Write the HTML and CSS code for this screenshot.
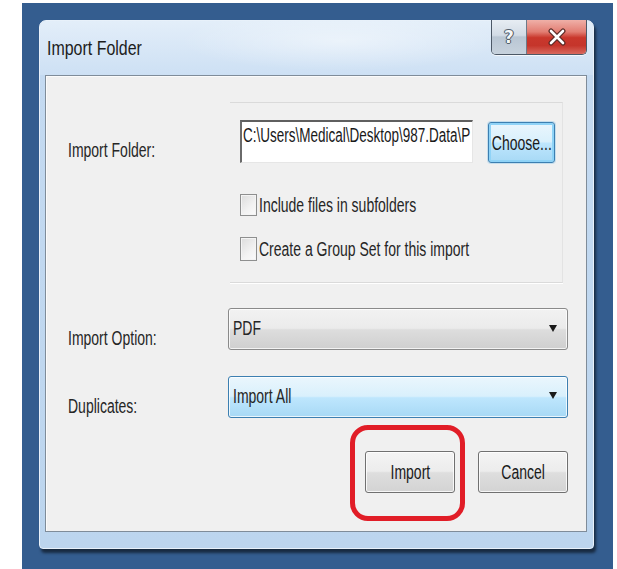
FILE: index.html
```html
<!DOCTYPE html>
<html lang="en">
<head>
<meta charset="utf-8">
<title>Import Folder</title>
<link rel="stylesheet" href="styles.css">
</head>
<body>
<div class="desktop">
  <div class="window">
    <div class="titlebar">
      <div class="title"><span class="nx">Import Folder</span></div>
      <div class="caption-btns">
        <div class="cbtn help"><span class="q">?</span></div>
        <div class="cbtn close">
          <svg width="18" height="18" viewBox="0 0 18 18" aria-hidden="true">
            <path d="M3 3 L15 15 M15 3 L3 15" stroke="#5a2a26" stroke-width="5" stroke-linecap="round"/>
            <path d="M3 3 L15 15 M15 3 L3 15" stroke="#ffffff" stroke-width="2.6" stroke-linecap="round"/>
          </svg>
        </div>
      </div>
    </div>

    <div class="client">
      <div class="folder-section">
        <div class="label folder-label"><span class="nx">Import Folder:</span></div>
        <div class="group">
          <div class="path-row">
            <div class="textbox"><span class="nx path">C:\Users\Medical\Desktop\987.Data\P</span></div>
            <div class="btn choose"><span class="nx c">Choose...</span></div>
          </div>
          <div class="check first"><span class="box"></span><span class="nx">Include files in subfolders</span></div>
          <div class="check second"><span class="box"></span><span class="nx">Create a Group Set for this import</span></div>
        </div>
      </div>

      <div class="field option">
        <div class="label"><span class="nx">Import Option:</span></div>
        <div class="combo"><span class="nx">PDF</span><span class="arrow"></span></div>
      </div>

      <div class="field dupes">
        <div class="label"><span class="nx">Duplicates:</span></div>
        <div class="combo hot"><span class="nx">Import All</span><span class="arrow"></span></div>
      </div>

      <div class="actions">
        <div class="btn push"><span class="nx c">Import</span></div>
        <div class="btn push"><span class="nx c">Cancel</span></div>
      </div>

      <div class="highlight"></div>
    </div>
  </div>
</div>
</body>
</html>
```

FILE: styles.css
```css
* {
  box-sizing: border-box;
}

html, body {
  margin: 0;
  padding: 0;
  background: #ffffff;
}

body {
  font-family: "Liberation Sans", Arial, sans-serif;
  font-size: 20px;
  color: #262626;
}

/* condensed UI text */
.nx {
  display: inline-block;
  white-space: nowrap;
  transform: scaleX(0.7);
  transform-origin: 0 50%;
  line-height: 22px;
}

.nx.c {
  transform-origin: 50% 50%;
}

.desktop {
  margin: 3px 4px 0 22px;
  width: 591px;
  height: 566px;
  padding: 17px 0 0 17px;
  background: #345d8f;
}

/* Aero style window */
.window {
  width: 555px;
  height: 529px;
  border: 1px solid #e8f1fa;
  border-radius: 7px 7px 4px 4px;
  background: linear-gradient(180deg, #dfeaf7 0, #cfe1f4 30px, #c4daf1 54px, #bcd5ee 100%);
  box-shadow: 2px 4px 3px rgba(0, 0, 0, 0.55);
  display: flex;
  flex-direction: column;
}

.titlebar {
  height: 54px;
  display: flex;
  justify-content: space-between;
  align-items: flex-start;
  background:
    radial-gradient(ellipse 160px 30px at 300px 20px, rgba(255, 255, 255, 0.45), rgba(255, 255, 255, 0) 100%),
    linear-gradient(180deg, #e3eef9 0, #cde0f4 100%);
  border-radius: 6px 6px 0 0;
}

.title {
  margin: 15px 0 0 7px;
  font-size: 21px;
  color: #1c1c1c;
}

.title .nx {
  transform: scaleX(0.76);
}

.caption-btns {
  display: flex;
  margin-right: 6px;
  margin-top: -1px;
  height: 35px;
  border: 1px solid #4c5866;
  border-top: none;
  border-radius: 0 0 5px 5px;
  overflow: hidden;
  box-shadow: 0 1px 0 rgba(255, 255, 255, 0.7);
}

.cbtn {
  display: flex;
  align-items: center;
  justify-content: center;
}

.help {
  width: 35px;
  border-right: 1px solid #6d7a88;
  background: linear-gradient(180deg, #e7edf3 0, #d2dbe5 45%, #b9c6d3 50%, #c7d2dd 100%);
}

.help .q {
  font-family: "DejaVu Sans", sans-serif;
  font-weight: bold;
  font-size: 17px;
  color: #f4f6f8;
  text-shadow: 0 0 1px #38434f, 0 0 1px #38434f, 1px 0 0 #5c6773, -1px 0 0 #5c6773, 0 1px 0 #5c6773, 0 -1px 0 #5c6773;
}

.close {
  width: 59px;
  background: linear-gradient(180deg, #efb0a8 0, #e27d72 35%, #c9372c 52%, #c5352b 75%, #d8685d 100%);
}

/* client area */
.client {
  position: relative;
  margin: 0 6px 16px 5px;
  flex: 1;
  border: 1px solid #7f8c99;
  background: #f0f0f0;
  padding-left: 22px;
  box-shadow: inset 1px 1px 0 #fbfbfb;
}

.label {
  color: #262626;
}

.folder-section {
  display: grid;
  grid-template-columns: 162px 333px;
  margin-top: 26px;
}

.folder-label {
  padding-top: 37px;
}

.group {
  height: 181px;
  border-top: 1px solid #dadada;
  border-right: 1px solid #e3e3e3;
  border-bottom: 1px solid #dadada;
  box-shadow: 0 1px 0 #ffffff;
  padding: 17px 0 0 10px;
}

.path-row {
  display: flex;
  align-items: flex-end;
  gap: 15px;
}

.textbox {
  width: 233px;
  height: 43px;
  background: #ffffff;
  border-top: 2px solid #5f5f5f;
  border-left: 2px solid #6a6a6a;
  border-right: 1px solid #e6e6e6;
  border-bottom: 1px solid #e6e6e6;
  padding: 2px 0 0 1px;
  overflow: hidden;
  color: #1a1a1a;
}

.nx.path {
  transform: scaleX(0.675);
}

.btn {
  display: flex;
  align-items: center;
  justify-content: center;
  border: 1px solid #707070;
  border-radius: 3px;
  background: linear-gradient(180deg, #f4f4f4 0, #ececec 48%, #dedede 52%, #d3d3d3 100%);
  box-shadow: inset 0 0 0 1px rgba(255, 255, 255, 0.8);
  color: #1a1a1a;
}

.choose {
  width: 67px;
  height: 41px;
  border: 1px solid #3c7fb1;
  background: linear-gradient(180deg, #eaf6fd 0, #d9f0fc 48%, #bee6fd 52%, #a7d9f5 100%);
  box-shadow: inset 0 0 0 2px #8fd3f7, 0 0 0 1px rgba(120, 190, 230, 0.35);
}

.check {
  display: flex;
  align-items: center;
  gap: 2px;
  color: #262626;
}

.check.first {
  margin-top: 31px;
  height: 22px;
}

.check.second {
  margin-top: 20px;
  height: 25px;
}

.box {
  flex: none;
  width: 17px;
  height: 22px;
  border: 1px solid #8e8f8f;
  background: linear-gradient(135deg, #dcdcdc 0, #f2f2f2 60%, #fbfbfb 100%);
  box-shadow: inset 0 0 0 1px #f4f4f4;
}

.check.second .box {
  height: 24px;
}

.field {
  display: grid;
  grid-template-columns: 160px 340px;
  align-items: center;
  height: 42px;
}

.field .label {
  padding-top: 18px;
}

.field.option {
  margin-top: 25px;
}

.field.dupes {
  margin-top: 25px;
}

.field.dupes .label {
  padding-top: 20px;
}

.combo {
  height: 42px;
  display: flex;
  align-items: center;
  justify-content: space-between;
  padding: 0 10px 2px 4px;
  border: 1px solid #8a8a8a;
  border-radius: 3px;
  background: linear-gradient(180deg, #f2f2f2 0, #ebebeb 48%, #dddddd 52%, #cfcfcf 100%);
  box-shadow: inset 0 0 0 1px rgba(255, 255, 255, 0.75);
}

.combo.hot {
  border-color: #3c7fb1;
  background: linear-gradient(180deg, #eaf6fd 0, #d9f0fc 48%, #bee6fd 52%, #a7d9f5 100%);
}

.arrow {
  width: 0;
  height: 0;
  border-left: 4px solid transparent;
  border-right: 4px solid transparent;
  border-top: 7px solid #1a1a1a;
}

.actions {
  display: flex;
  justify-content: flex-end;
  gap: 23px;
  margin-top: 34px;
  padding-right: 18px;
}

.push {
  width: 90px;
  height: 42px;
}

/* red call-out ring around the Import button */
.highlight {
  position: absolute;
  left: 304px;
  top: 349px;
  width: 115px;
  height: 96px;
  border: 5px solid #e11d27;
  border-radius: 18px;
  pointer-events: none;
}
```
